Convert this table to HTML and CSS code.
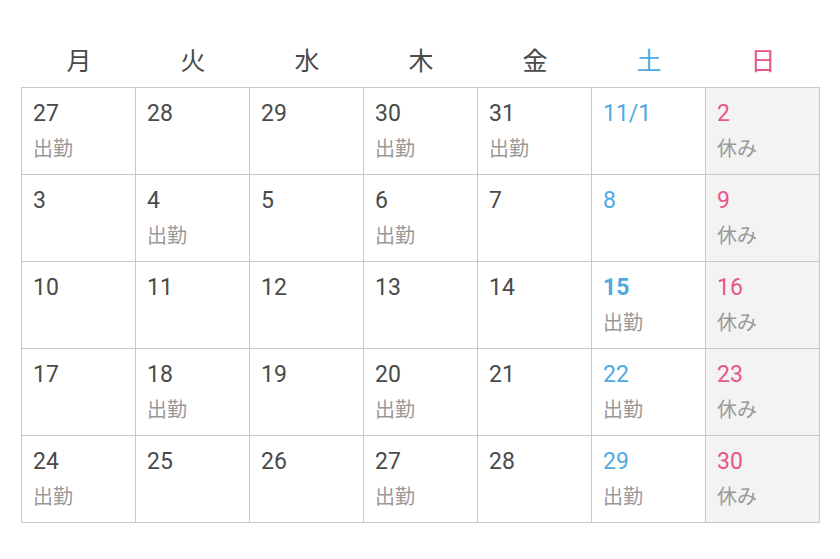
FILE: index.html
```html
<!DOCTYPE html>
<html lang="ja">
<head>
<meta charset="utf-8">
<link rel="stylesheet" href="styles.css">
</head>
<body>
<div class="cal">
  <div class="head">
    <div>月</div><div>火</div><div>水</div><div>木</div><div>金</div><div class="sat">土</div><div class="sun">日</div>
  </div>
  <div class="grid">
    <div class="cell"><span class="num">27</span><span class="lab">出勤</span></div>
    <div class="cell"><span class="num">28</span></div>
    <div class="cell"><span class="num">29</span></div>
    <div class="cell"><span class="num">30</span><span class="lab">出勤</span></div>
    <div class="cell"><span class="num">31</span><span class="lab">出勤</span></div>
    <div class="cell sat"><span class="num">11/1</span></div>
    <div class="cell sun"><span class="num">2</span><span class="lab">休み</span></div>

    <div class="cell"><span class="num">3</span></div>
    <div class="cell"><span class="num">4</span><span class="lab">出勤</span></div>
    <div class="cell"><span class="num">5</span></div>
    <div class="cell"><span class="num">6</span><span class="lab">出勤</span></div>
    <div class="cell"><span class="num">7</span></div>
    <div class="cell sat"><span class="num">8</span></div>
    <div class="cell sun"><span class="num">9</span><span class="lab">休み</span></div>

    <div class="cell"><span class="num">10</span></div>
    <div class="cell"><span class="num">11</span></div>
    <div class="cell"><span class="num">12</span></div>
    <div class="cell"><span class="num">13</span></div>
    <div class="cell"><span class="num">14</span></div>
    <div class="cell sat"><span class="num today">15</span><span class="lab">出勤</span></div>
    <div class="cell sun"><span class="num">16</span><span class="lab">休み</span></div>

    <div class="cell"><span class="num">17</span></div>
    <div class="cell"><span class="num">18</span><span class="lab">出勤</span></div>
    <div class="cell"><span class="num">19</span></div>
    <div class="cell"><span class="num">20</span><span class="lab">出勤</span></div>
    <div class="cell"><span class="num">21</span></div>
    <div class="cell sat"><span class="num">22</span><span class="lab">出勤</span></div>
    <div class="cell sun"><span class="num">23</span><span class="lab">休み</span></div>

    <div class="cell"><span class="num">24</span><span class="lab">出勤</span></div>
    <div class="cell"><span class="num">25</span></div>
    <div class="cell"><span class="num">26</span></div>
    <div class="cell"><span class="num">27</span><span class="lab">出勤</span></div>
    <div class="cell"><span class="num">28</span></div>
    <div class="cell sat"><span class="num">29</span><span class="lab">出勤</span></div>
    <div class="cell sun"><span class="num">30</span><span class="lab">休み</span></div>
  </div>
</div>
</body>
</html>
```
FILE: styles.css
```css
html, body {
  margin: 0;
  padding: 0;
  background: #fff;
}
body {
  font-family: Roboto, "Noto Sans CJK JP", sans-serif;
  color: #4a4a4a;
}
.cal {
  padding: 0 0 0 21px;
}
.head {
  display: grid;
  grid-template-columns: repeat(7, 114px);
  padding-left: 1px;
  height: 87px;
  box-sizing: border-box;
  padding-top: 43px;
}
.head div {
  text-align: center;
  font-family: "Noto Sans CJK JP", sans-serif;
  font-size: 25px;
  line-height: 32px;
  color: #4a4a4a;
}
.head .sat { color: #4faae2; }
.head .sun { color: #e8558a; }
.grid {
  display: grid;
  grid-template-columns: repeat(7, 114px);
  grid-auto-rows: 87px;
  width: 799px;
  border-left: 1px solid #c8c8c8;
  border-top: 1px solid #c8c8c8;
  box-sizing: border-box;
}
.cell {
  border-right: 1px solid #c8c8c8;
  border-bottom: 1px solid #c8c8c8;
  padding: 13px 0 0 11px;
  display: flex;
  flex-direction: column;
  align-items: flex-start;
}
.num {
  font-size: 23px;
  line-height: 26px;
  color: #4a4a4a;
}
.lab {
  font-family: "Noto Sans CJK JP", sans-serif;
  font-size: 20px;
  line-height: 26px;
  margin-top: 8px;
  color: #999;
}
.cell.sat .num { color: #4faae2; }
.cell.sun { background: #f3f3f3; }
.cell.sun .num { color: #e8558a; }
.num.today { font-weight: 700; }
```
